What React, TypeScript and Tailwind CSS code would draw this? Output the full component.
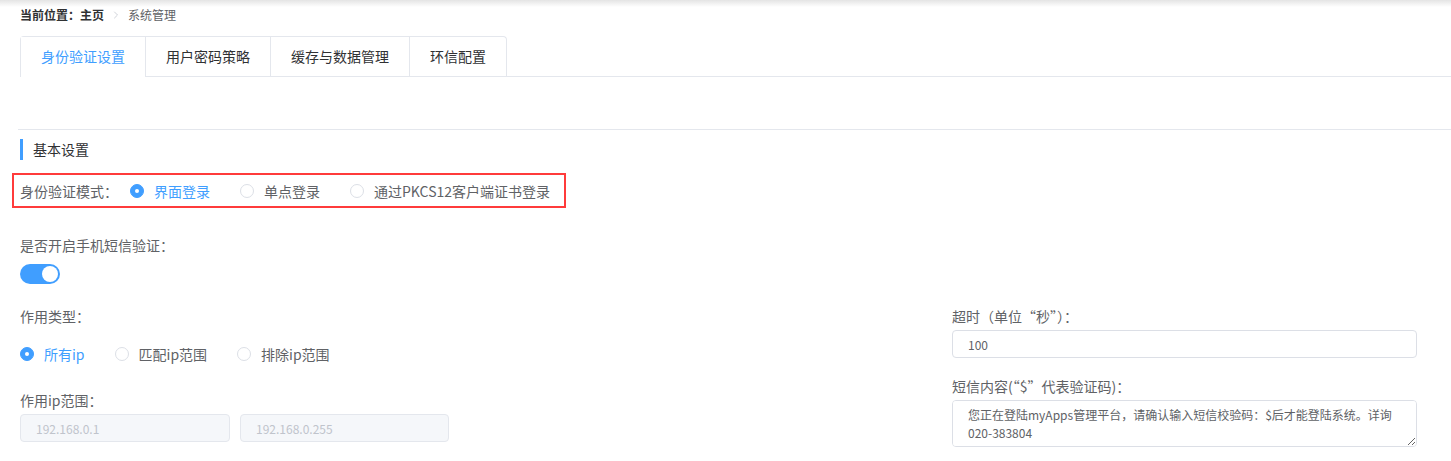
import { ChevronRight } from "lucide-react";

const font = "font-['Noto_Sans_CJK_SC','Noto_Sans',sans-serif]";

const tabs = ["身份验证设置", "用户密码策略", "缓存与数据管理", "环信配置"];

function Radio({ label, checked }: { label: string; checked?: boolean }) {
  return (
    <label className="mr-[30px] flex shrink-0 items-center whitespace-nowrap">
      {checked ? (
        <span className="flex h-[14px] w-[14px] shrink-0 items-center justify-center rounded-full border border-[#409eff] bg-[#409eff]">
          <span className="h-[4px] w-[4px] rounded-full bg-white" />
        </span>
      ) : (
        <span className="h-[14px] w-[14px] shrink-0 rounded-full border border-[#dcdfe6] bg-white" />
      )}
      <span className={`pl-[10px] text-[14px] leading-[20px] ${checked ? "text-[#409eff]" : "text-[#606266]"}`}>
        {label}
      </span>
    </label>
  );
}

export default function App() {
  return (
    <div className={`relative min-h-screen bg-white ${font}`}>
      {/* shadow from the header above */}
      <div className="pointer-events-none absolute inset-x-0 top-0 h-[7px] bg-gradient-to-b from-[#e4e4e4] to-white/0" />

      <div className="flex h-[30px] items-center whitespace-nowrap px-[20px] text-[12px] leading-[18px]">
        <span className="font-bold text-[#303133]">当前位置：主页</span>
        <ChevronRight size={12} strokeWidth={1.5} className="mx-[6px] text-[#c0c4cc]" />
        <span className="text-[#606266]">系统管理</span>
      </div>

      <div className="ml-[20px] mt-[6px] flex border-b border-[#e4e7ed]">
        <div className="-mb-px flex rounded-t-[4px] border border-b-0 border-[#e4e7ed]">
          {tabs.map((t, i) => (
            <div
              key={t}
              className={`flex h-[40px] items-center whitespace-nowrap px-[20px] text-[14px] ${
                i > 0 ? "border-l border-[#e4e7ed]" : ""
              } ${i === 0 ? "border-b border-transparent bg-white text-[#409eff]" : "border-b border-[#e4e7ed] text-[#303133]"}`}
            >
              {t}
            </div>
          ))}
        </div>
      </div>

      <div className="ml-[18px] mt-[52px] border-t border-[#e4e7ed]" />

      <div className="ml-[20px] mt-[9px] flex h-[21px] items-center border-l-[3px] border-[#409eff] pl-[10px] text-[14px] text-[#303133]">
        基本设置
      </div>

      <div className="ml-[12px] mt-[13px] flex h-[35px] w-[554px] items-center whitespace-nowrap border-2 border-[#ff3b3b] pl-[6px]">
        <span className="mr-[12px] shrink-0 text-[14px] leading-[20px] text-[#606266]">身份验证模式：</span>
        <Radio label="界面登录" checked />
        <Radio label="单点登录" />
        <Radio label="通过PKCS12客户端证书登录" />
      </div>

      <div className="ml-[20px] mt-[27px] text-[14px] leading-[20px] text-[#606266]">是否开启手机短信验证：</div>
      <div className="ml-[20px] mt-[9px] flex h-[20px] w-[40px] items-center justify-end rounded-full bg-[#409eff] pr-[2px]">
        <span className="h-[16px] w-[16px] rounded-full bg-white" />
      </div>

      <div className="mt-[22px] flex pl-[20px]">
        <div className="w-[932px] shrink-0">
          <div className="text-[14px] leading-[20px] text-[#606266]">作用类型：</div>
          <div className="mt-[18px] flex h-[20px] items-center">
            <Radio label="所有ip" checked />
            <Radio label="匹配ip范围" />
            <Radio label="排除ip范围" />
          </div>
          <div className="mt-[26px] text-[14px] leading-[20px] text-[#606266]">作用ip范围：</div>
          <div className="mt-[4px] flex gap-[10px]">
            <input
              readOnly
              value="192.168.0.1"
              className="h-[28px] w-[210px] rounded-[4px] border border-[#e4e7ed] bg-[#f5f7fa] px-[15px] text-[12px] text-[#c0c4cc] outline-none"
            />
            <input
              readOnly
              value="192.168.0.255"
              className="h-[28px] w-[209px] rounded-[4px] border border-[#e4e7ed] bg-[#f5f7fa] px-[15px] text-[12px] text-[#c0c4cc] outline-none"
            />
          </div>
        </div>

        <div className="w-[465px] shrink-0">
          <div className="whitespace-nowrap text-[14px] leading-[20px] text-[#606266]">超时（单位“秒”）：</div>
          <input
            readOnly
            value="100"
            className="mt-[4px] h-[28px] w-full rounded-[4px] border border-[#dcdfe6] bg-white px-[15px] text-[12px] text-[#606266] outline-none"
          />
          <div className="mt-[18px] whitespace-nowrap text-[14px] leading-[20px] text-[#606266]">短信内容(“$”代表验证码)：</div>
          <textarea
            readOnly
            value="您正在登陆myApps管理平台，请确认输入短信校验码：$后才能登陆系统。详询020-383804"
            className="mt-[4px] block h-[47px] w-full rounded-[4px] border border-[#dcdfe6] bg-white px-[15px] py-[5px] text-[12px] leading-[18px] text-[#606266] outline-none"
          />
        </div>
      </div>
    </div>
  );
}
